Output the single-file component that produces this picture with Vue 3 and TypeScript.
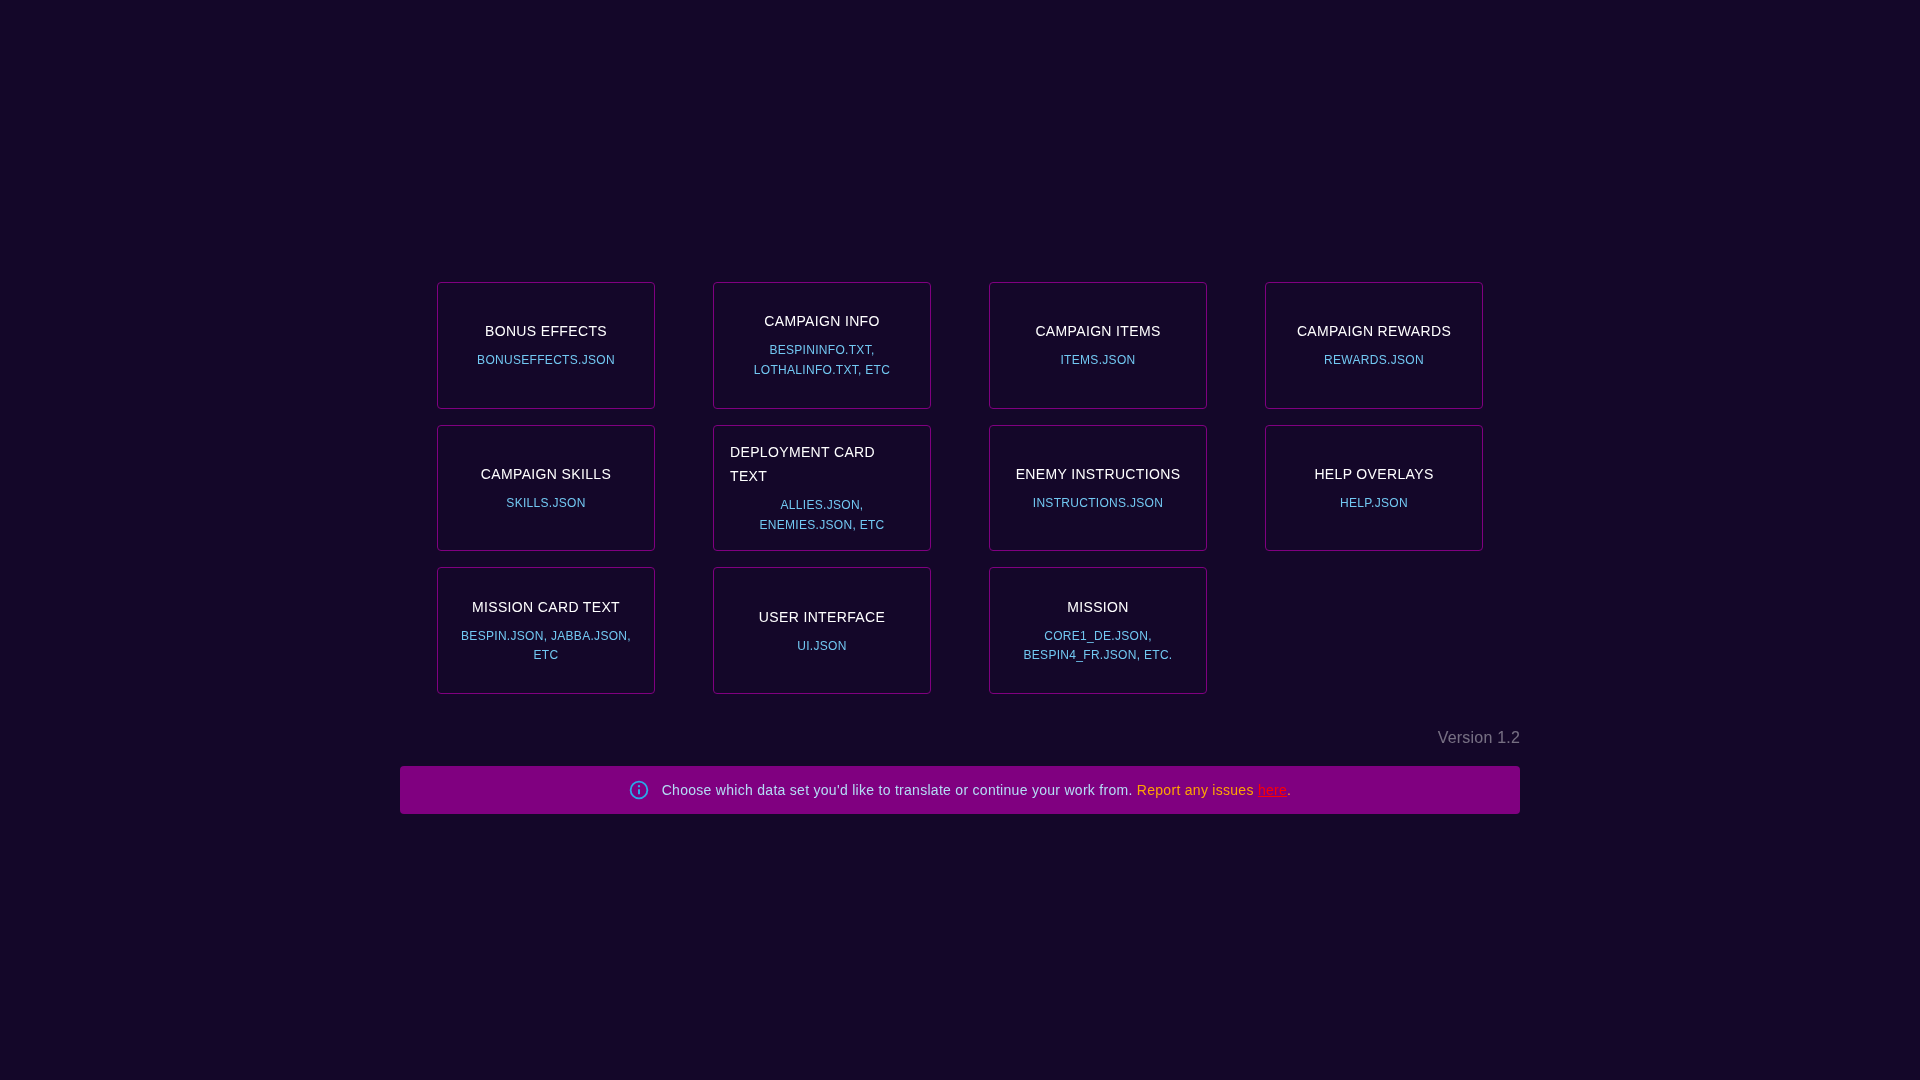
<script setup lang="ts">
interface Item { title: string; sub: string; left?: boolean }
const items: Item[] = [
  { title: 'BONUS EFFECTS', sub: 'BONUSEFFECTS.JSON' },
  { title: 'CAMPAIGN INFO', sub: 'BESPININFO.TXT, LOTHALINFO.TXT, ETC' },
  { title: 'CAMPAIGN ITEMS', sub: 'ITEMS.JSON' },
  { title: 'CAMPAIGN REWARDS', sub: 'REWARDS.JSON' },
  { title: 'CAMPAIGN SKILLS', sub: 'SKILLS.JSON' },
  { title: 'DEPLOYMENT CARD TEXT', sub: 'ALLIES.JSON, ENEMIES.JSON, ETC', left: true },
  { title: 'ENEMY INSTRUCTIONS', sub: 'INSTRUCTIONS.JSON' },
  { title: 'HELP OVERLAYS', sub: 'HELP.JSON' },
  { title: 'MISSION CARD TEXT', sub: 'BESPIN.JSON, JABBA.JSON, ETC' },
  { title: 'USER INTERFACE', sub: 'UI.JSON' },
  { title: 'MISSION', sub: 'CORE1_DE.JSON, BESPIN4_FR.JSON, ETC.' },
]
</script>

<template>
  <main class="page">
    <section class="wrap">
      <div class="grid">
        <article v-for="it in items" :key="it.title" class="card">
          <div class="title" :class="{ left: it.left }">{{ it.title }}</div>
          <div class="sub">{{ it.sub }}</div>
        </article>
      </div>
      <div class="version">Version 1.2</div>
      <div class="banner">
        <svg class="icon" viewBox="0 0 24 24" fill="none" stroke="currentColor" stroke-width="2.2">
          <circle cx="12" cy="12" r="10" />
          <path d="M12 11v6" stroke-width="2.4" />
          <circle cx="12" cy="7.5" r="1.4" fill="currentColor" stroke="none" />
        </svg>
        <span class="msg">Choose which data set you'd like to translate or continue your work from. <span class="warn">Report any issues <a class="link">here</a>.</span></span>
      </div>
    </section>
  </main>
</template>

<style scoped>
.page {
  min-height: 1080px;
  box-sizing: border-box;
  padding-top: 282px;
  display: flex;
  justify-content: center;
  font-family: "Liberation Sans", Arial, sans-serif;
}
.wrap {
  width: 1120px;
  will-change: transform;
}
.grid {
  display: grid;
  grid-template-columns: repeat(4, 218px);
  grid-auto-rows: 126.7px;
  justify-content: center;
  column-gap: 58px;
  row-gap: 16px;
}
.card {
  box-sizing: border-box;
  padding: 14px 16px 14.8px;
  border: 1px solid #800080;
  border-radius: 4px;
  display: flex;
  flex-direction: column;
  justify-content: center;
  text-align: center;
}
.title {
  color: #fff;
  font-size: 14px;
  line-height: 24px;
  letter-spacing: 0.35px;
}
.title.left {
  text-align: left;
}
.sub {
  margin-top: 8px;
  padding: 0 2px;
  color: #72c8f2;
  font-size: 12px;
  line-height: 19.5px;
  letter-spacing: 0.3px;
}
.version {
  margin-top: 31.9px;
  text-align: right;
  color: rgba(255, 255, 255, 0.42);
  font-size: 16px;
  line-height: 24px;
  letter-spacing: 0.2px;
}
.banner {
  margin-top: 16px;
  height: 48px;
  background: #800080;
  border-radius: 4px;
  display: flex;
  align-items: center;
  justify-content: center;
  gap: 13px;
  font-size: 14px;
  letter-spacing: 0.285px;
  color: #b4dcf5;
}
.icon {
  width: 20px;
  height: 20px;
  color: #29a9e8;
}
.warn {
  color: orange;
}
.link {
  color: red;
  text-decoration: underline;
}
</style>

<style>
html, body {
  background: #140729;
}
</style>
